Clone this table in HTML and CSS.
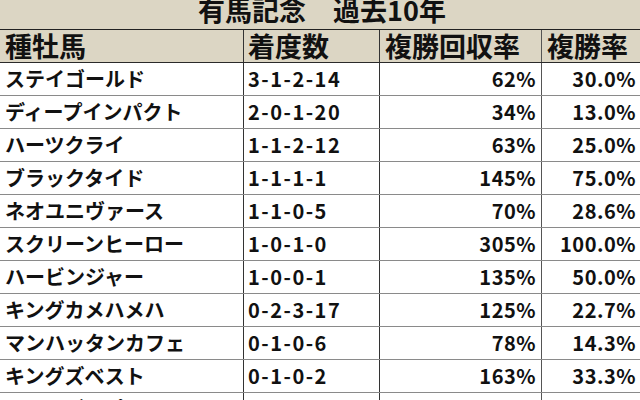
FILE: index.html
```html
<!DOCTYPE html>
<html lang="ja">
<head>
<meta charset="utf-8">
<link rel="stylesheet" href="styles.css">
</head>
<body>
<div class="sheet">
  <div class="title"><span class="title-text">有馬記念　過去10年</span></div>
  <div class="table">
    <div class="row head">
      <div class="c c1">種牡馬</div><div class="c c2">着度数</div><div class="c c3">複勝回収率</div><div class="c c4">複勝率</div>
    </div>
    <div class="row"><div class="c c1">ステイゴールド</div><div class="c c2">3-1-2-14</div><div class="c c3 num">62%</div><div class="c c4 num">30.0%</div></div>
    <div class="row"><div class="c c1">ディープインパクト</div><div class="c c2">2-0-1-20</div><div class="c c3 num">34%</div><div class="c c4 num">13.0%</div></div>
    <div class="row"><div class="c c1">ハーツクライ</div><div class="c c2">1-1-2-12</div><div class="c c3 num">63%</div><div class="c c4 num">25.0%</div></div>
    <div class="row"><div class="c c1">ブラックタイド</div><div class="c c2">1-1-1-1</div><div class="c c3 num">145%</div><div class="c c4 num">75.0%</div></div>
    <div class="row"><div class="c c1">ネオユニヴァース</div><div class="c c2">1-1-0-5</div><div class="c c3 num">70%</div><div class="c c4 num">28.6%</div></div>
    <div class="row"><div class="c c1">スクリーンヒーロー</div><div class="c c2">1-0-1-0</div><div class="c c3 num">305%</div><div class="c c4 num">100.0%</div></div>
    <div class="row"><div class="c c1">ハービンジャー</div><div class="c c2">1-0-0-1</div><div class="c c3 num">135%</div><div class="c c4 num">50.0%</div></div>
    <div class="row"><div class="c c1">キングカメハメハ</div><div class="c c2">0-2-3-17</div><div class="c c3 num">125%</div><div class="c c4 num">22.7%</div></div>
    <div class="row"><div class="c c1">マンハッタンカフェ</div><div class="c c2">0-1-0-6</div><div class="c c3 num">78%</div><div class="c c4 num">14.3%</div></div>
    <div class="row"><div class="c c1">キングズベスト</div><div class="c c2">0-1-0-2</div><div class="c c3 num">163%</div><div class="c c4 num">33.3%</div></div>
    <div class="row"><div class="c c1">ジャングルポケット</div><div class="c c2">0-1-0-1</div><div class="c c3 num">120%</div><div class="c c4 num">50.0%</div></div>
  </div>
</div>
</body>
</html>
```
FILE: styles.css
```css
html, body {
  margin: 0;
  padding: 0;
  background: #ffffff;
}
.sheet {
  width: 640px;
  height: 400px;
  overflow: hidden;
  font-family: "Noto Sans CJK JP", "Noto Sans", sans-serif;
  font-weight: 700;
  color: #111111;
}
.title {
  height: 29px;
  overflow: hidden;
  background: #dcd6c4;
  text-align: center;
  font-size: 27px;
  line-height: 29px;
  padding-left: 4px;
}
.title-text {
  display: inline-block;
  line-height: 19px;
  vertical-align: top;
}
.table {
  border-top: 1px solid #222222;
}
.row {
  display: grid;
  grid-template-columns: 243px 136px 162px 99px;
  height: 32px;
  border-bottom: 1px solid #8a8a8a;
}
.row.head {
  background: #dcd6c4;
  border-bottom: 1px solid #2a2a2a;
}
.c {
  line-height: 32px;
  font-size: 20px;
  white-space: nowrap;
}
.head .c {
  font-size: 27px;
}
.c1 {
  padding-left: 5px;
}
.c2 {
  padding-left: 4px;
  border-left: 1px solid #333333;
  letter-spacing: 1.5px;
}
.head .c2 {
  letter-spacing: 0;
}
.c3 {
  border-left: 1px solid #333333;
}
.c4 {
  border-left: 1px solid #555555;
  padding-left: 5px;
}
.num {
  text-align: right;
  letter-spacing: 0.5px;
}
.c3.num {
  padding-right: 5px;
}
.c4.num {
  padding-left: 0;
  padding-right: 4px;
}
.head .c3 {
  padding-left: 5px;
}
```
